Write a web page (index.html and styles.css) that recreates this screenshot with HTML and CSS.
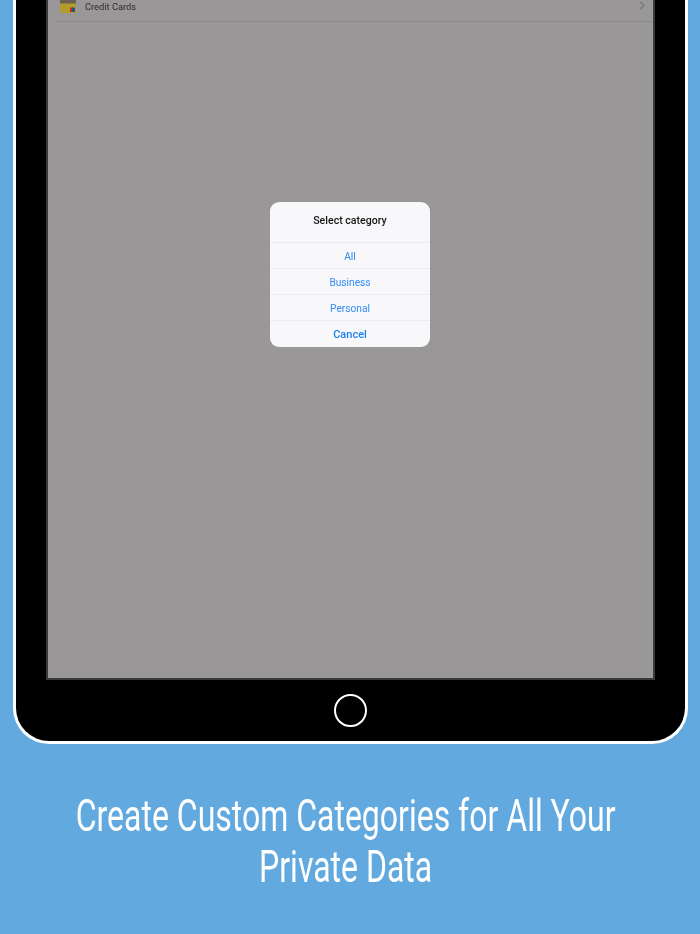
FILE: index.html
```html
<!DOCTYPE html>
<html lang="en">
<head>
<meta charset="utf-8">
<title>Select category</title>
<link rel="stylesheet" href="styles.css">
</head>
<body>
<div class="page">
  <div class="device">
    <div class="screen">
      <div class="row">
        <svg class="card-icon" width="16" height="13" viewBox="0 0 16 13" aria-hidden="true">
          <rect width="16" height="13" fill="#b39b2c"/>
          <rect width="16" height="3.5" fill="#6b6050"/>
          <rect x="10" y="7.5" width="3" height="4.5" fill="#b5352c"/>
          <rect x="12" y="7.5" width="3" height="4.5" fill="#2c4f8e"/>
        </svg>
        <span class="row-label">Credit Cards</span>
        <svg class="chevron" width="6" height="9" viewBox="0 0 6 9" aria-hidden="true">
          <path d="M1 .8 5 4.5 1 8.2" fill="none" stroke="#7a7779" stroke-width="1.2"/>
        </svg>
      </div>
      <div class="dialog">
        <div class="dialog-title">Select category</div>
        <div class="dialog-option">All</div>
        <div class="dialog-option">Business</div>
        <div class="dialog-option">Personal</div>
        <div class="dialog-option dialog-cancel">Cancel</div>
      </div>
    </div>
    <div class="home-button"></div>
  </div>
  <h1 class="caption"><span class="caption-text">Create Custom Categories for All Your<br>Private Data</span></h1>
</div>
</body>
</html>
```
FILE: styles.css
```css
* { box-sizing: border-box; }
html, body { margin: 0; padding: 0; }
body {
  width: 700px;
  height: 934px;
  overflow: hidden;
  background: #62a9df;
  font-family: "Roboto", "Liberation Sans", sans-serif;
}
.page { display: flex; flex-direction: column; height: 934px; }
.device {
  width: 675px;
  height: 744px;
  margin-left: 13px;
  background: #000;
  border: 3px solid #fff;
  border-top: 0;
  border-radius: 0 0 36px 36px;
  display: flex;
  flex-direction: column;
  align-items: center;
}
.screen {
  width: 609px;
  height: 680px;
  flex: none;
  background: #9a9799;
  border: 2px solid #3a3a3a;
  border-top: 0;
  display: flex;
  flex-direction: column;
  align-items: center;
}
.row {
  align-self: stretch;
  height: 22px;
  flex: none;
  margin-left: 8px;
  padding: 0 8px 0 4px;
  display: flex;
  align-items: flex-start;
  border-bottom: 1px solid #8b888a;
  margin-bottom: 180px;
  filter: blur(0.3px);
}
.card-icon { flex: none; }
.row-label {
  margin-left: 9px;
  font-size: 9.3px;
  line-height: 13px;
  color: #2b2a2b;
  flex: 1;
}
.chevron { flex: none; margin-top: 1px; }
.dialog {
  width: 160px;
  height: 145px;
  flex: none;
  margin-right: 1px;
  background: #f8f7fa;
  border-radius: 9px;
  display: flex;
  flex-direction: column;
  overflow: hidden;
  filter: blur(0.3px);
}
.dialog-title {
  height: 40px;
  flex: none;
  text-align: center;
  font-size: 10.6px;
  font-weight: 500;
  line-height: 38px;
  color: #161616;
}
.dialog-option {
  height: 26px;
  flex: none;
  border-top: 1px solid #ecebee;
  text-align: center;
  font-size: 10.2px;
  line-height: 27px;
  color: #2f8cf6;
}
.dialog-cancel { font-size: 11px; font-weight: 500; color: #1a80f5; }
.home-button {
  width: 33px;
  height: 33px;
  flex: none;
  margin: 14px 0 0;
  border: 2px solid #fff;
  border-radius: 50%;
}
.caption {
  margin: 46px 0 0;
  width: 691px;
  display: flex;
  justify-content: center;
  text-align: center;
  color: #fff;
  font-weight: 400;
  font-size: 45px;
  line-height: 51px;
}
.caption-text {
  flex: none;
  display: block;
  transform: scaleX(0.711);
  white-space: nowrap;
}
```
